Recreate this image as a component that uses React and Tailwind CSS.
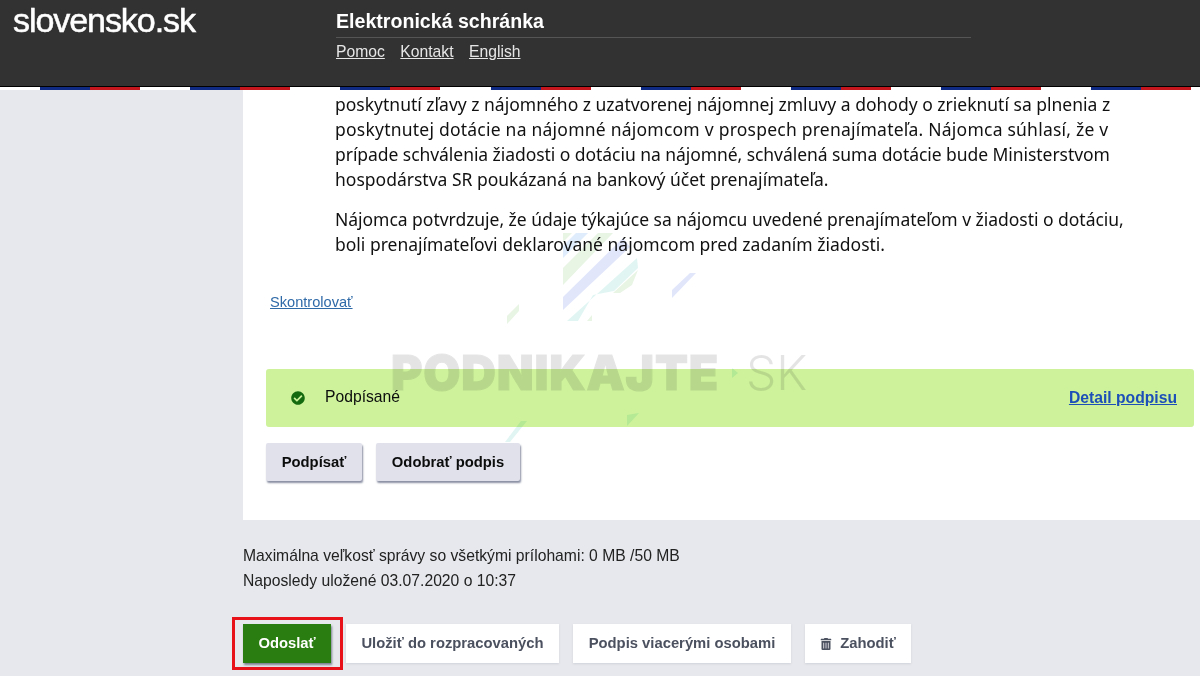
import { FaCheckCircle, FaTrashAlt } from 'react-icons/fa'

const stripes = [0, 1, 2, 3, 4, 5, 6, 7]

const Watermark = () => (
  <div className="absolute inset-0 pointer-events-none overflow-hidden">
    <svg className="absolute left-0 top-0 mix-blend-multiply" width="1200" height="676" viewBox="0 0 1200 676">
      <polygon points="563,233 572,233 563,242" fill="#e8f4e4" />
      <polygon points="563,246 576,233 588,233 563,258" fill="#dfecfb" />
      <polygon points="563,268 598,233 613,233 563,285" fill="#e8f4e4" />
      <polygon points="563,297 623,238 630,247 563,310" fill="#e1e6fb" />
      <polygon points="567,321 637,258 638,268 614,291 593,295 578,321" fill="#e1f6f3" />
      <polygon points="613,293 638,270 632,285 620,293" fill="#e8f4e4" />
      <polygon points="587,321 592,315 592,321" fill="#e8f4e4" />
      <polygon points="672,290 690,273 696,273 672,298" fill="#e1e6fb" />
      <polygon points="507,316 519,304 519,311 507,324" fill="#e8f4e4" />
      <polygon points="505,442 521,421 527,421 510,442" fill="#e1f6f3" />
      <polygon points="627,415 639,413 627,426" fill="#e1f6f3" />
      <polygon points="732,368 738,373 732,378" fill="#dff6f3" />
    </svg>
    <div className="absolute left-[391px] top-[344px] flex items-center h-[58px] font-['Inter',sans-serif] text-[48px] leading-none text-black opacity-10">
      <span className="font-black tracking-[0.8px] [-webkit-text-stroke:1.2px_black]">PODNIKAJTE</span>
      <span className="ml-[27px] font-light">SK</span>
    </div>
  </div>
)

export default function App() {
  return (
    <div className="relative h-[676px] w-[1200px] overflow-hidden bg-[#e6e8ed] font-['Liberation_Sans',sans-serif] text-[#0b0c0c]">
      <header className="flex h-[87px] border-b border-black bg-[#323232] text-white">
        <div className="w-[336px] pl-[13px] pt-[2px] text-[34.1px] leading-[36px] tracking-[-1.1px] text-white [-webkit-text-stroke:0.5px_white]">
          slovensko.sk
        </div>
        <div className="w-[635px]">
          <div className="h-[38px] border-b border-[#555] pt-[10px] text-[19.6px] font-bold leading-[22px]">
            Elektronická schránka
          </div>
          <div className="flex gap-[15.5px] pt-[4px] text-[15.7px] leading-[20px] text-[#e6e6e6]">
            <a className="underline">Pomoc</a>
            <a className="underline">Kontakt</a>
            <a className="underline">English</a>
          </div>
        </div>
      </header>

      <div className="flex h-[3px] bg-white pl-[40px]">
        {stripes.map((i) => (
          <div key={i} className="mr-[50.2px] flex shrink-0">
            <div className="h-[3px] w-[50px] bg-[#0f2a83]" />
            <div className="h-[3px] w-[50px] bg-[#c4161c]" />
          </div>
        ))}
      </div>

      <main className="ml-[243px] h-[430px] bg-white">
        <div className="pl-[92px] pt-[2px] font-['Noto_Sans',sans-serif] text-[17.5px] leading-[25px] text-[#111] whitespace-nowrap">
          <p>
            <span className="block">poskytnutí zľavy z nájomného z uzatvorenej nájomnej zmluvy a dohody o zrieknutí sa plnenia z</span>
            <span className="block tracking-[0.23px]">poskytnutej dotácie na nájomné nájomcom v prospech prenajímateľa. Nájomca súhlasí, že v</span>
            <span className="block tracking-[-0.055px]">prípade schválenia žiadosti o dotáciu na nájomné, schválená suma dotácie bude Ministerstvom</span>
            <span className="block">hospodárstva SR poukázaná na bankový účet prenajímateľa.</span>
          </p>
          <p className="mt-[15px]">
            <span className="block tracking-[-0.03px]">Nájomca potvrdzuje, že údaje týkajúce sa nájomcu uvedené prenajímateľom v žiadosti o dotáciu,</span>
            <span className="block">boli prenajímateľovi deklarované nájomcom pred zadaním žiadosti.</span>
          </p>
        </div>

        <div className="ml-[27px] mt-[33px]">
          <a className="text-[14.6px] leading-[20px] text-[#2f6aa8] underline">Skontrolovať</a>
        </div>

        <div className="ml-[23px] mr-[6px] mt-[55px] flex h-[58px] items-center rounded-[3px] bg-[#cdf29b] pl-[25px] pr-[17px]">
          <FaCheckCircle className="text-[#146a0f]" size={14} />
          <span className="ml-[20px] -mt-[2px] text-[15.7px]">Podpísané</span>
          <a className="ml-auto text-[15.7px] font-bold text-[#1d4fb8] underline">Detail podpisu</a>
        </div>

        <div className="ml-[23px] mt-[16px] flex gap-[14px] text-[14.8px] font-bold">
          <button className="h-[38px] w-[96px] rounded-[2px] bg-[#e1e1ec] shadow-[1px_2px_2px_#8a8fa3]">
            Podpísať
          </button>
          <button className="h-[38px] w-[144px] rounded-[2px] bg-[#e1e1ec] shadow-[1px_2px_2px_#8a8fa3]">
            Odobrať podpis
          </button>
        </div>
      </main>

      <section className="ml-[243px] pt-[23px] text-[15.7px] leading-[25px] text-[#222]">
        <p>Maximálna veľkosť správy so všetkými prílohami: 0 MB /50 MB</p>
        <p>Naposledy uložené 03.07.2020 o 10:37</p>
      </section>

      <div className="ml-[232px] mt-[24px] flex items-center text-[14.8px] font-bold text-[#4c5160]">
        <div className="border-[3px] border-[#e8111a] pb-[4px] pl-[8px] pr-[9px] pt-[4px]">
          <button className="block h-[39px] w-[88px] bg-[#2a7d10] text-white shadow-[1px_2px_2px_#7b8190]">
            Odoslať
          </button>
        </div>
        <button className="ml-[3px] h-[39px] w-[213px] bg-white shadow-[0_1px_2px_#cfd2da]">
          Uložiť do rozpracovaných
        </button>
        <button className="ml-[14px] h-[39px] w-[218px] bg-white shadow-[0_1px_2px_#cfd2da]">
          Podpis viacerými osobami
        </button>
        <button className="ml-[14px] flex h-[39px] w-[106px] items-center justify-center gap-2 bg-white shadow-[0_1px_2px_#cfd2da]">
          <FaTrashAlt size={12} />
          Zahodiť
        </button>
      </div>

      <Watermark />
    </div>
  )
}
